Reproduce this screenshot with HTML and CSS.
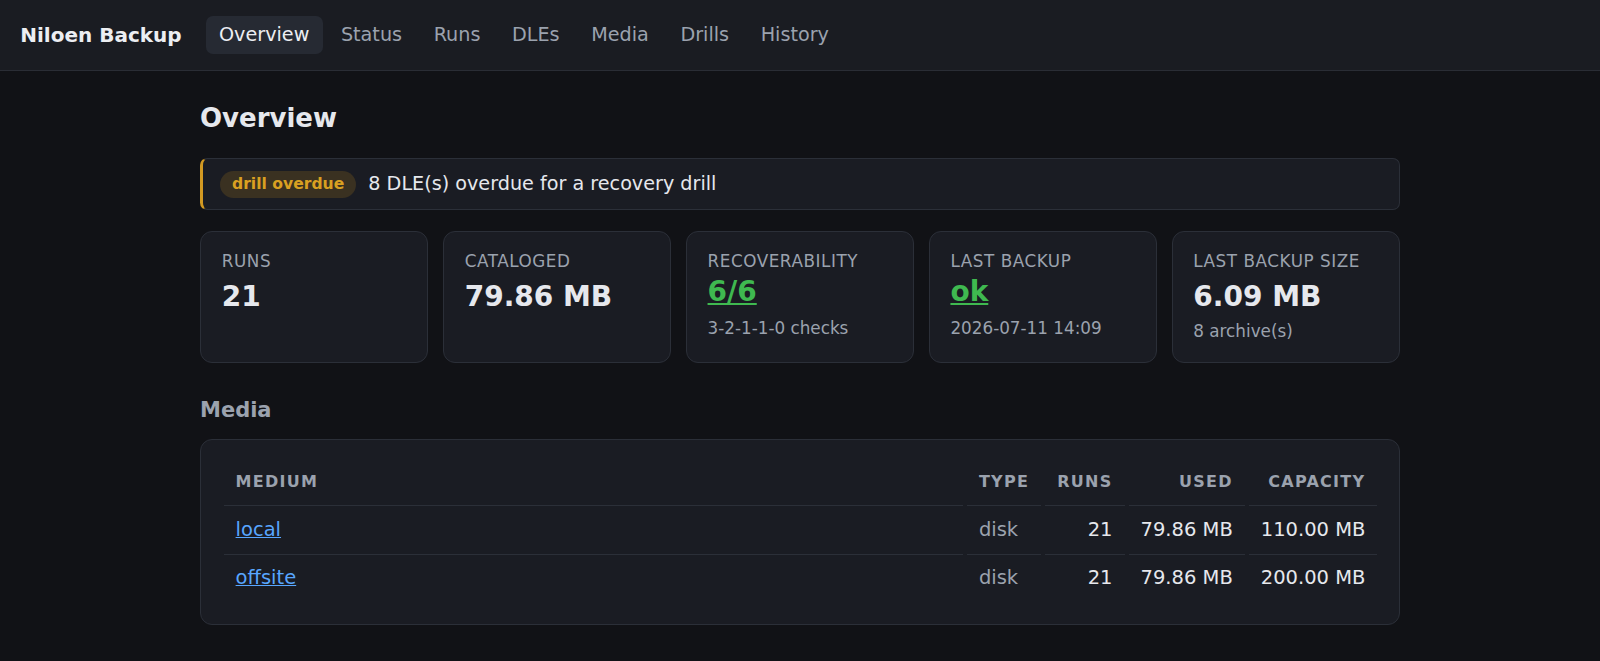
FILE: index.html
```html
<!DOCTYPE html>
<html>
<head>
    <title>Niloen Backup - Overview</title>
    <meta name="viewport" content="width=device-width, initial-scale=1.0">
    <link rel="stylesheet" href="styles.css">
</head>
<body>
    <nav class="topbar">
        <div class="brand">Niloen Backup</div>
        <div class="tabs">
            <a class="tab active" href="#">Overview</a>
            <a class="tab" href="#">Status</a>
            <a class="tab" href="#">Runs</a>
            <a class="tab" href="#">DLEs</a>
            <a class="tab" href="#">Media</a>
            <a class="tab" href="#">Drills</a>
            <a class="tab" href="#">History</a>
        </div>
    </nav>

    <main class="page">
        <h1>Overview</h1>

        <div class="alert">
            <span class="badge">drill overdue</span>
            <span>8 DLE(s) overdue for a recovery drill</span>
        </div>

        <div class="stats">
            <div class="stat">
                <div class="stat-label">Runs</div>
                <div class="stat-value">21</div>
            </div>
            <div class="stat">
                <div class="stat-label">Cataloged</div>
                <div class="stat-value">79.86 MB</div>
            </div>
            <div class="stat">
                <div class="stat-label">Recoverability</div>
                <div class="stat-value link"><a href="#">6/6</a></div>
                <div class="stat-sub">3-2-1-1-0 checks</div>
            </div>
            <div class="stat">
                <div class="stat-label">Last backup</div>
                <div class="stat-value link"><a href="#">ok</a></div>
                <div class="stat-sub">2026-07-11 14:09</div>
            </div>
            <div class="stat">
                <div class="stat-label">Last backup size</div>
                <div class="stat-value">6.09 MB</div>
                <div class="stat-sub">8 archive(s)</div>
            </div>
        </div>

        <h2>Media</h2>

        <div class="panel">
            <table>
                <thead>
                    <tr>
                        <th class="col-medium">Medium</th>
                        <th>Type</th>
                        <th class="num">Runs</th>
                        <th class="num">Used</th>
                        <th class="num">Capacity</th>
                    </tr>
                </thead>
                <tbody>
                    <tr>
                        <td><a href="#">local</a></td>
                        <td class="muted">disk</td>
                        <td class="num">21</td>
                        <td class="num">79.86 MB</td>
                        <td class="num">110.00 MB</td>
                    </tr>
                    <tr>
                        <td><a href="#">offsite</a></td>
                        <td class="muted">disk</td>
                        <td class="num">21</td>
                        <td class="num">79.86 MB</td>
                        <td class="num">200.00 MB</td>
                    </tr>
                </tbody>
            </table>
        </div>
    </main>
</body>
</html>
```

FILE: styles.css
```css
* { box-sizing: border-box; }
body { margin: 0; background: #111216; color: #e6e8ed; font-family: "DejaVu Sans", "Noto Sans", sans-serif;
       font-size: 19.2px; line-height: 1.5; }
a { color: #58a6ff; }

/* top bar */
.topbar { display: flex; align-items: center; height: 71px; padding: 0 20.2px; background: #1a1c22;
          border-bottom: 1px solid #2a2d35; }
.brand { font-size: 20px; font-weight: bold; color: #eceef2; margin-right: 24px; }
.tabs { display: flex; gap: 4.8px; }
.tab { padding: 4.5px 13.4px; border-radius: 7px; color: #9ba2ae; text-decoration: none; line-height: 28.8px; }
.tab.active { background: #262a33; color: #eceef2; }

/* page */
.page { max-width: 1200px; margin: 0 auto; padding: 32px 0 24px; }
h1 { font-size: 26px; line-height: 1.2; margin: 0 0 24px; }
h2 { font-size: 21px; line-height: 1.2; color: #9ba2ae; margin: 34.7px 0 15.8px; }

.alert { display: flex; align-items: center; gap: 12px; padding: 10.5px 14px 10.5px 17px; background: #1a1c23;
         border: 1px solid #2b2f38; border-left: 3px solid #d29922; border-radius: 7.2px; }
.badge { font-size: 15.6px; font-weight: bold; line-height: 1.2; padding: 4.2px 12px; border-radius: 999px;
         background: #3a3121; color: #d9a021; }

/* stat cards */
.stats { display: grid; grid-template-columns: repeat(5, 1fr); gap: 14.4px; margin-top: 21px; }
.stat { background: #1a1c23; border: 1px solid #2b2f38; border-radius: 12px; padding: 18.4px 20.8px 18.6px; }
.stat-label { font-size: 16.8px; line-height: 1.4; letter-spacing: .033em; color: #9ba2ae; text-transform: uppercase; }
.stat-value { font-size: 28px; font-weight: bold; line-height: 1.2; margin-top: 6.3px; }
.stat-value a { color: #3fb950; }
.stat-value.link { margin-top: 1.3px; }
.stat-sub { font-size: 16.8px; line-height: 1.4; color: #9ba2ae; margin-top: 6.35px; }
.stat-value.link + .stat-sub { margin-top: 8px; }

/* media table */
.panel { background: #1a1c23; border: 1px solid #2b2f38; border-radius: 12px; padding: 20px 17.6px 21px 18.6px; }
table { width: 100%; border-collapse: separate; border-spacing: 4px 0; }
th { font-size: 16px; line-height: 1.5; letter-spacing: .08em; text-transform: uppercase; color: #9ba2ae;
     text-align: left; padding: 10px 12px 11px; white-space: nowrap; }
td { font-size: 19.5px; padding: 9.6px 12px; line-height: 28.8px; border-top: 1px solid #2b2f38; white-space: nowrap; }
.col-medium { width: 100%; }
.num { text-align: right; }
.muted { color: #9ba2ae; }
```
